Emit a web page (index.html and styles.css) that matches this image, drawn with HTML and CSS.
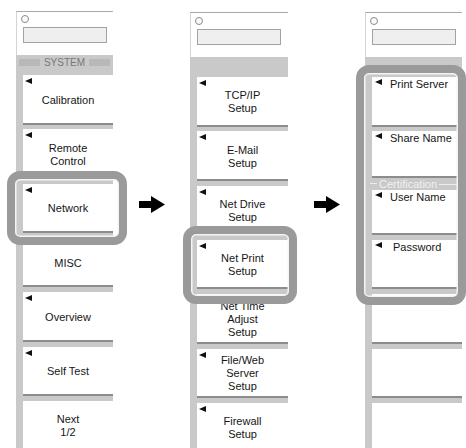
FILE: index.html
```html
<!DOCTYPE html>
<html>
<head>
<meta charset="utf-8">
<title>Softkey menus</title>
<link rel="stylesheet" href="styles.css">
</head>
<body>
<div class="stage">
  <section class="col col-1">
    <div class="top"><span class="knob"></span><span class="field"></span></div>
    <div class="band">
      <div class="grouphead"><span class="rule"></span><span class="gtext">SYSTEM</span><span class="rule"></span></div>
    </div>
    <div class="keys">
      <div class="key"><span class="tri"></span><span class="lbl">Calibration</span></div>
      <div class="key"><span class="tri"></span><span class="lbl">Remote<br>Control</span></div>
      <div class="key"><span class="tri"></span><span class="lbl">Network</span></div>
      <div class="key"><span class="lbl">MISC</span></div>
      <div class="key"><span class="tri"></span><span class="lbl">Overview</span></div>
      <div class="key"><span class="tri"></span><span class="lbl">Self Test</span></div>
      <div class="key"><span class="lbl">Next<br>1/2</span></div>
    </div>
  </section>

  <div class="gap">
    <svg class="arrow" width="26" height="17" viewBox="0 0 26 17"><rect x="0" y="5" width="14" height="7" fill="#000"/><polygon points="12,0 26,8.5 12,17" fill="#000"/></svg>
  </div>

  <section class="col col-2">
    <div class="top"><span class="knob"></span><span class="field"></span></div>
    <div class="band"></div>
    <div class="keys">
      <div class="key"><span class="tri"></span><span class="lbl">TCP/IP<br>Setup</span></div>
      <div class="key"><span class="tri"></span><span class="lbl">E-Mail<br>Setup</span></div>
      <div class="key"><span class="tri"></span><span class="lbl">Net Drive<br>Setup</span></div>
      <div class="key"><span class="tri"></span><span class="lbl">Net Print<br>Setup</span></div>
      <div class="key"><span class="tri"></span><span class="lbl">Net Time<br>Adjust<br>Setup</span></div>
      <div class="key"><span class="tri"></span><span class="lbl">File/Web<br>Server<br>Setup</span></div>
      <div class="key"><span class="tri"></span><span class="lbl">Firewall<br>Setup</span></div>
    </div>
  </section>

  <div class="gap">
    <svg class="arrow" width="26" height="17" viewBox="0 0 26 17"><rect x="0" y="5" width="14" height="7" fill="#000"/><polygon points="12,0 26,8.5 12,17" fill="#000"/></svg>
  </div>

  <section class="col col-3">
    <div class="top"><span class="knob"></span><span class="field"></span></div>
    <div class="band"></div>
    <div class="keys">
      <div class="key rowkey"><span class="tri"></span><span class="ktext">Print Server</span></div>
      <div class="key rowkey k-share"><span class="tri"></span><span class="ktext">Share Name</span></div>
      <div class="cert"><span class="crule crule-l"></span><span class="ctext">Certification</span><span class="crule"></span></div>
      <div class="key rowkey k-user"><span class="tri"></span><span class="ktext">User Name</span></div>
      <div class="key rowkey"><span class="tri"></span><span class="ktext k-pw">Password</span></div>
      <div class="key"></div>
      <div class="key"></div>
      <div class="key"></div>
    </div>
  </section>

  <div class="hl hl-1"></div>
  <div class="hl hl-2"></div>
  <div class="hl hl-3"></div>
</div>
</body>
</html>
```

FILE: styles.css
```css
html, body {
  margin: 0;
  padding: 0;
  background: #ffffff;
}

body {
  font-family: "Liberation Sans", Arial, sans-serif;
  font-size: 11px;
  color: #161616;
}

.stage {
  position: relative;
  width: 466px;
  height: 448px;
  overflow: hidden;
  display: flex;
  align-items: stretch;
  padding: 11px 0 0 16px;
  box-sizing: border-box;
}

.col {
  flex: none;
  width: 97px;
  background: #c9c9c9;
  display: flex;
  flex-direction: column;
}

.col > * {
  flex: none;
}

.col-2 {
  width: 98px;
  margin-top: 1px;
}

.col-3 {
  margin-top: 1px;
}

.gap {
  flex: none;
  width: 77px;
  display: flex;
  justify-content: center;
  align-items: flex-start;
  padding-top: 185px;
}

.arrow {
  display: block;
}

/* top white panel */
.top {
  height: 44px;
  box-sizing: border-box;
  background: #ffffff;
  border-top: 1px solid #a9a9a9;
  border-left: 1px solid #d4d4d4;
  padding: 3px 0 0 4px;
  display: flex;
  flex-direction: column;
  align-items: flex-start;
}

.col-2 .top,
.col-3 .top {
  height: 45px;
  padding-top: 4px;
}

.knob {
  display: block;
  width: 8px;
  height: 8px;
  box-sizing: border-box;
  border: 1px solid #8a8a8a;
  border-radius: 50%;
  background: #fbfbfb;
}

.field {
  display: block;
  width: 84px;
  height: 16px;
  box-sizing: border-box;
  margin: 4px 0 0 2px;
  border: 1px solid #a2a2a2;
  background: #efefef;
}

/* band under the top panel */
.band {
  height: 20px;
}

.grouphead {
  display: flex;
  align-items: center;
  height: 7px;
  margin: 4px 3px 0;
}

.rule {
  flex: 1;
  height: 7px;
  background: #b8b8b8;
}

.gtext {
  font-size: 10px;
  line-height: 10px;
  color: #787878;
  padding: 0 4px;
}

/* softkeys */
.keys {
  margin-left: 7px;
  display: flex;
  flex-direction: column;
}

.key {
  flex: none;
  height: 47.5px;
  border-bottom: 2px solid #8c8c8c;
  margin-bottom: 4.83px;
  background: #ffffff;
  display: grid;
}

.key > .tri,
.key > .lbl {
  grid-area: 1 / 1;
}

.tri {
  align-self: start;
  justify-self: start;
  margin: 3px 0 0 2px;
  width: 0;
  height: 0;
  border-right: 7px solid #111111;
  border-top: 3.5px solid transparent;
  border-bottom: 3.5px solid transparent;
}

.lbl {
  align-self: center;
  justify-self: center;
  text-align: center;
  line-height: 13px;
  padding-top: 3px;
}

/* third column: label beside the triangle */
.rowkey {
  display: flex;
  align-items: flex-start;
  padding-left: 3px;
}

.rowkey .tri {
  margin: 2px 0 0 0;
}

.ktext {
  margin-left: 8px;
  line-height: 13px;
  padding-top: 1px;
}

.k-pw {
  margin-left: 11px;
}

.k-share {
  height: 45px;
  margin-bottom: 0;
}

.k-user {
  height: 43px;
  margin-bottom: 5px;
}

.cert {
  height: 11.67px;
  margin-left: -2px;
  display: flex;
  align-items: center;
  color: #f1f1f1;
  font-size: 11px;
  line-height: 11px;
}

.crule {
  flex: 1;
  height: 0;
  border-top: 1px solid #ededed;
}

.crule-l {
  flex: none;
  width: 6px;
  align-self: stretch;
  margin-top: 5px;
  border-left: 1px solid #ededed;
}

.ctext {
  padding: 0 2px;
}

/* rounded highlight frames over the keys */
.hl {
  position: absolute;
  box-sizing: border-box;
  border: 8px solid #9a9a9a;
  border-radius: 13px;
  box-shadow: inset 0 0 0 1.5px #f4f4f4;
}

.hl-1 {
  left: 7px;
  top: 171px;
  width: 120px;
  height: 74px;
}

.hl-2 {
  left: 183px;
  top: 226px;
  width: 114px;
  height: 78px;
}

.hl-3 {
  left: 356px;
  top: 65px;
  width: 110px;
  height: 240px;
}
```
